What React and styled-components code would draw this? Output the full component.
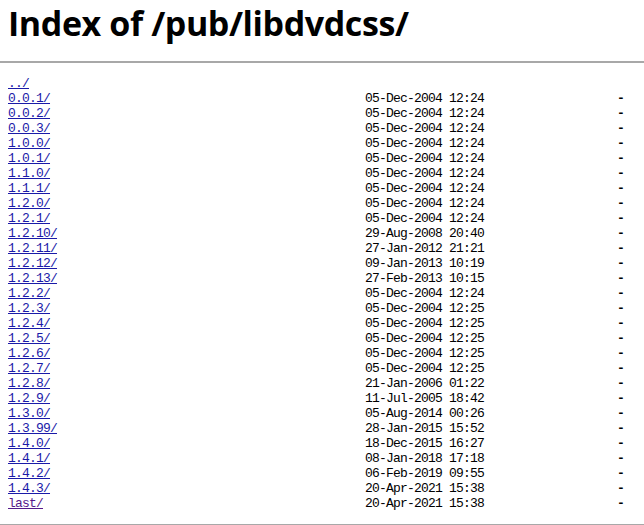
import React from 'react';
import styled, { createGlobalStyle } from 'styled-components';

const GlobalStyle = createGlobalStyle`
  html, body { margin: 0; padding: 0; background: #fff; }
`;

const entries = [
  { name: '../' },
  { name: '0.0.1/', date: '05-Dec-2004 12:24' },
  { name: '0.0.2/', date: '05-Dec-2004 12:24' },
  { name: '0.0.3/', date: '05-Dec-2004 12:24' },
  { name: '1.0.0/', date: '05-Dec-2004 12:24' },
  { name: '1.0.1/', date: '05-Dec-2004 12:24' },
  { name: '1.1.0/', date: '05-Dec-2004 12:24' },
  { name: '1.1.1/', date: '05-Dec-2004 12:24' },
  { name: '1.2.0/', date: '05-Dec-2004 12:24' },
  { name: '1.2.1/', date: '05-Dec-2004 12:24' },
  { name: '1.2.10/', date: '29-Aug-2008 20:40' },
  { name: '1.2.11/', date: '27-Jan-2012 21:21' },
  { name: '1.2.12/', date: '09-Jan-2013 10:19' },
  { name: '1.2.13/', date: '27-Feb-2013 10:15' },
  { name: '1.2.2/', date: '05-Dec-2004 12:24' },
  { name: '1.2.3/', date: '05-Dec-2004 12:25' },
  { name: '1.2.4/', date: '05-Dec-2004 12:25' },
  { name: '1.2.5/', date: '05-Dec-2004 12:25' },
  { name: '1.2.6/', date: '05-Dec-2004 12:25' },
  { name: '1.2.7/', date: '05-Dec-2004 12:25' },
  { name: '1.2.8/', date: '21-Jan-2006 01:22' },
  { name: '1.2.9/', date: '11-Jul-2005 18:42' },
  { name: '1.3.0/', date: '05-Aug-2014 00:26' },
  { name: '1.3.99/', date: '28-Jan-2015 15:52' },
  { name: '1.4.0/', date: '18-Dec-2015 16:27' },
  { name: '1.4.1/', date: '08-Jan-2018 17:18' },
  { name: '1.4.2/', date: '06-Feb-2019 09:55' },
  { name: '1.4.3/', date: '20-Apr-2021 15:38' },
  { name: 'last/', date: '20-Apr-2021 15:38', visited: true },
];

const App = () => {
  return (
    <Page>
      <GlobalStyle />
      <Title>Index of /pub/libdvdcss/</Title>
      <Rule />
      <Listing>
        { entries.map(e => (
          <Row key={ e.name }>
            <Name href={ e.name } $visited={ e.visited }>{ e.name }</Name>
            <Date>{ e.date || '' }</Date>
            <Size>{ e.date ? '-' : '' }</Size>
          </Row>
        )) }
      </Listing>
      <Rule $bottom />
    </Page>
  );
};

export default App;


const Page = styled.div`
  padding: 0 0 0 8px;
  min-height: 525px;
  box-sizing: border-box;
`;

const Title = styled.h1`
  margin: 0 0 15px;
  font-family: "Open Sans", "Liberation Sans", sans-serif;
  font-weight: 700;
  font-size: 34px;
  line-height: 46px;
  letter-spacing: -0.4px;
  color: #000;
`;

const Rule = styled.hr`
  margin: ${ p => p.$bottom ? '13px' : '0' } 0 0 -8px;
  border: none;
  border-top: 2px solid #a8a8a8;
  height: 0;
`;

const Listing = styled.div`
  margin-top: 13px;
  font-family: "Liberation Mono", "DejaVu Sans Mono", monospace;
  font-size: 13px;
  letter-spacing: -0.8px;
  line-height: 15px;
`;

const Row = styled.div`
  display: grid;
  grid-template-columns: 357px 119px 140px;
  height: 15px;
  white-space: pre;
`;

const Name = styled.a`
  justify-self: start;
  color: ${ p => p.$visited ? '#551a8b' : '#1a1aa8' };
  text-decoration: underline;
`;

const Date = styled.span`
  color: #000;
`;

const Size = styled.span`
  color: #000;
  text-align: right;
  font-weight: 700;
`;
